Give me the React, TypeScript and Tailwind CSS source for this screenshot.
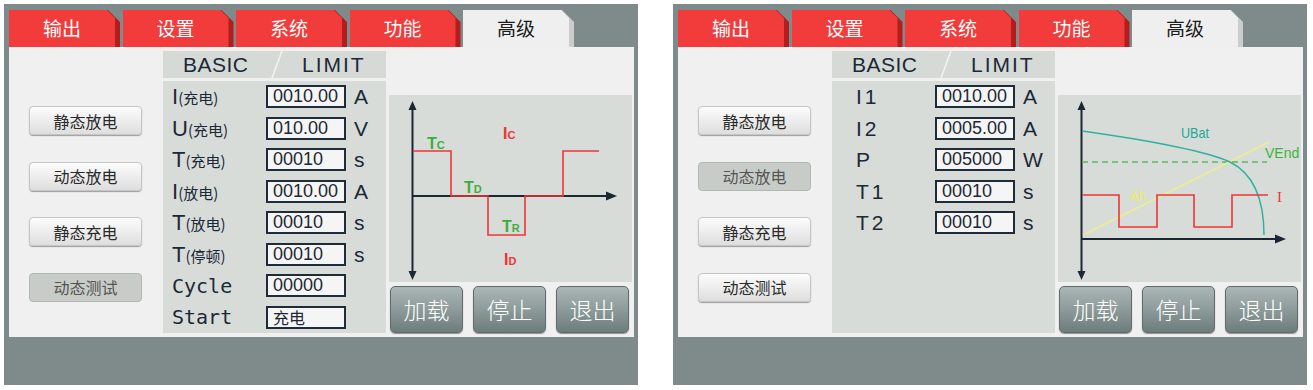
import React from 'react'

const tabs = ['输出', '设置', '系统', '功能', '高级']

function Tab({ label, active }: { label: string; active: boolean }) {
    return (
        <div
            className={`flex w-[111px] h-[37px] rounded-tl-[4px] [clip-path:polygon(0_0,calc(100%-12px)_0,100%_12px,100%_100%,0_100%)] ${active ? 'bg-[#c9cdcc]' : 'bg-[#b41d1d]'
                }`}
        >
            <div
                className={`flex-1 flex items-center justify-center text-[19px] [font-family:'Noto_Sans_CJK_SC',sans-serif] [clip-path:polygon(0_0,calc(100%-8px)_0,100%_8px,100%_100%,0_100%)] ${active ? 'bg-[#efefef] text-[#1c1c1c]' : 'bg-[#f23b3b] text-white'
                    }`}
            >
                {label}
            </div>
            <div className="w-[5px]" />
        </div>
    )
}

function SideButton({ label, pressed }: { label: string; pressed?: boolean }) {
    return (
        <div
            className={`w-[113px] h-[29px] rounded-[4px] flex items-center justify-center text-[16px] [font-family:'Noto_Sans_CJK_SC',sans-serif] ${pressed
                    ? 'bg-[#c8ccc8] border border-[#b3b7b3] text-[#555]'
                    : 'bg-gradient-to-b from-[#fcfcfc] to-[#dedede] border border-[#c6c6c6] text-[#2a2a2a] shadow-[0_1px_1px_rgba(0,0,0,0.35)]'
                }`}
        >
            {label}
        </div>
    )
}

function ActionButton({ label }: { label: string }) {
    return (
        <div className="w-[73px] h-[47px] rounded-[5px] flex items-center justify-center bg-gradient-to-b from-[#aab6b5] via-[#8d9b9a] to-[#6d7d7c] border border-[#5e6d6c] shadow-[0_1px_1px_rgba(0,0,0,0.4)] text-white text-[23px] font-light [font-family:'Noto_Sans_CJK_SC',sans-serif]">
            {label}
        </div>
    )
}

type Row = { label: React.ReactNode; value: string; unit: string; cjk?: boolean }

function Sub({ main, sub }: { main: string; sub: string }) {
    return (
        <span className="flex items-baseline">
            <span className="text-[22px] [font-family:'Liberation_Sans',sans-serif]">{main}</span>
            <span className="text-[15px] [font-family:'Noto_Sans_CJK_SC',sans-serif]">({sub})</span>
        </span>
    )
}

function Mono({ text }: { text: string }) {
    return <span className="text-[20px] [font-family:'DejaVu_Sans_Mono',monospace]">{text}</span>
}

function Plain({ text }: { text: string }) {
    return <span className="text-[21px] tracking-[3px] [font-family:'Liberation_Sans',sans-serif]">{text}</span>
}

const leftRows: Row[] = [
    { label: <Sub main="I" sub="充电" />, value: '0010.00', unit: 'A' },
    { label: <Sub main="U" sub="充电" />, value: '010.00', unit: 'V' },
    { label: <Sub main="T" sub="充电" />, value: '00010', unit: 's' },
    { label: <Sub main="I" sub="放电" />, value: '0010.00', unit: 'A' },
    { label: <Sub main="T" sub="放电" />, value: '00010', unit: 's' },
    { label: <Sub main="T" sub="停顿" />, value: '00010', unit: 's' },
    { label: <Mono text="Cycle" />, value: '00000', unit: '' },
    { label: <Mono text="Start" />, value: '充电', unit: '', cjk: true },
]

const rightRows: Row[] = [
    { label: <Plain text="I1" />, value: '0010.00', unit: 'A' },
    { label: <Plain text="I2" />, value: '0005.00', unit: 'A' },
    { label: <Plain text="P" />, value: '005000', unit: 'W' },
    { label: <Plain text="T1" />, value: '00010', unit: 's' },
    { label: <Plain text="T2" />, value: '00010', unit: 's' },
]

function ParamTable({ rows, indent }: { rows: Row[]; indent: string }) {
    return (
        <div className="w-[223px] flex flex-col pt-[4px] pb-[4px]">
            <div className="h-[27px] bg-[#d5dad7] flex items-center pl-[20px] text-[#1c2836] text-[21px] [font-family:'Liberation_Sans',sans-serif]">
                <span className="w-[64px] tracking-[0.5px]">BASIC</span>
                <svg width="12" height="27" viewBox="0 0 12 27" className="ml-[24px]">
                    <line x1="11" y1="0" x2="1" y2="27" stroke="#f2f4f3" strokeWidth="1.5" />
                </svg>
                <span className="ml-[19px] tracking-[2px]">LIMIT</span>
            </div>
            <div className="h-[3px]" />
            <div className="flex-1 bg-[#d7dcd9] flex flex-col text-[#1c2836]">
                {rows.map((r, i) => (
                    <div key={i} className={`h-[31.5px] flex items-center ${indent}`}>
                        <div className="flex-1">{r.label}</div>
                        <div
                            className={`w-[80px] h-[23px] border-2 border-[#1e2b38] bg-[#f5f5f5] flex items-center pl-[5px] ${r.cjk
                                    ? 'text-[16px] [font-family:\'Noto_Sans_CJK_SC\',sans-serif]'
                                    : 'text-[18px] [font-family:\'Liberation_Sans\',sans-serif]'
                                }`}
                        >
                            {r.value}
                        </div>
                        <div className="w-[40px] pl-[8px] text-[21px] [font-family:'Liberation_Sans',sans-serif]">
                            {r.unit}
                        </div>
                    </div>
                ))}
            </div>
        </div>
    )
}

const AX = '#1b2733'

function Axes({ y }: { y: number }) {
    return (
        <g>
            <line x1="23.5" y1="12" x2="23.5" y2="180" stroke={AX} strokeWidth="2" />
            <polygon points="23.5,6 19.5,15 27.5,15" fill={AX} />
            <polygon points="23.5,185 19.5,176 27.5,176" fill={AX} />
            <line x1="23.5" y1={y} x2="218" y2={y} stroke={AX} strokeWidth="2" />
            <polygon points={`228,${y} 217,${y - 4.5} 217,${y + 4.5}`} fill={AX} />
        </g>
    )
}

function PulseChart() {
    const g = '#3cae3c'
    const r = '#ef3434'
    return (
        <svg width="243" height="187" viewBox="0 0 243 187" className="[font-family:'Liberation_Sans',sans-serif]">
            <Axes y={101} />
            <path d="M24 56 H62 V101 H99 V140 H136 V101 H174 V56 H210" fill="none" stroke={r} strokeWidth="1.6" />
            <text x="38" y="54" fill={g} fontSize="16" fontWeight="bold">T<tspan fontSize="11">C</tspan></text>
            <text x="114" y="44" fill={r} fontSize="16" fontWeight="bold">I<tspan fontSize="11">C</tspan></text>
            <text x="75" y="98" fill={g} fontSize="16" fontWeight="bold">T<tspan fontSize="11">D</tspan></text>
            <text x="113" y="137" fill={g} fontSize="16" fontWeight="bold">T<tspan fontSize="11">R</tspan></text>
            <text x="115" y="170" fill={r} fontSize="16" fontWeight="bold">I<tspan fontSize="11">D</tspan></text>
        </svg>
    )
}

function BatteryChart() {
    return (
        <svg width="243" height="187" viewBox="0 0 243 187" className="[font-family:'Liberation_Sans',sans-serif]">
            <Axes y={144} />
            <line x1="24" y1="67" x2="209" y2="67" stroke="#5cb85c" strokeWidth="1.3" strokeDasharray="6 4" />
            <line x1="25" y1="140" x2="211" y2="47" stroke="#f4f46a" strokeWidth="1.2" />
            <path d="M24 36 C95 46 148 56 172 67 C196 79 206 104 206 140" fill="none" stroke="#2fb3a0" strokeWidth="1.5" />
            <path d="M24 100 H61 V132 H99 V100 H136 V132 H174 V100 H210" fill="none" stroke="#ef3434" strokeWidth="1.6" />
            <text x="123" y="43" fill="#22a897" fontSize="15" textLength="28" lengthAdjust="spacingAndGlyphs">UBat</text>
            <text x="207" y="63" fill="#3cb43c" fontSize="14">VEnd</text>
            <text x="72" y="106" fill="#eded5a" fontSize="15" textLength="16" lengthAdjust="spacingAndGlyphs">Ah</text>
            <text x="219" y="107" fill="#ef3434" fontSize="15" className="[font-family:'Liberation_Serif',serif]">I</text>
        </svg>
    )
}

function Panel({ variant }: { variant: 'pulse' | 'battery' }) {
    const side = ['静态放电', '动态放电', '静态充电', '动态测试']
    const pressed = variant === 'pulse' ? 3 : 1
    return (
        <div className="w-[634px] h-[381px] bg-[#7f8b8a] flex flex-col pl-[5px] pt-[6px]">
            <div className="flex gap-[2.5px]">
                {tabs.map((t, i) => (
                    <Tab key={t} label={t} active={i === 4} />
                ))}
            </div>
            <div className="w-[625px] h-[290px] bg-[#f0f0f0] flex">
                <div className="w-[154px] flex flex-col gap-[26.5px] pt-[59px] pl-[20px]">
                    {side.map((s, i) => (
                        <SideButton key={s} label={s} pressed={i === pressed} />
                    ))}
                </div>
                {variant === 'pulse' ? (
                    <ParamTable rows={leftRows} indent="pl-[9px]" />
                ) : (
                    <ParamTable rows={rightRows} indent="pl-[24px]" />
                )}
                <div className="w-[3px]" />
                <div className="w-[243px] flex flex-col pt-[48px]">
                    <div className="h-[187px] bg-[#d8dcd9]">
                        {variant === 'pulse' ? <PulseChart /> : <BatteryChart />}
                    </div>
                    <div className="flex gap-[10px] pl-[1px] mt-[4px]">
                        <ActionButton label="加载" />
                        <ActionButton label="停止" />
                        <ActionButton label="退出" />
                    </div>
                </div>
            </div>
        </div>
    )
}

export default function App() {
    return (
        <div className="w-[1313px] h-[390px] bg-white flex gap-[35px] pl-[4px] pt-[4px]">
            <Panel variant="pulse" />
            <Panel variant="battery" />
        </div>
    )
}
